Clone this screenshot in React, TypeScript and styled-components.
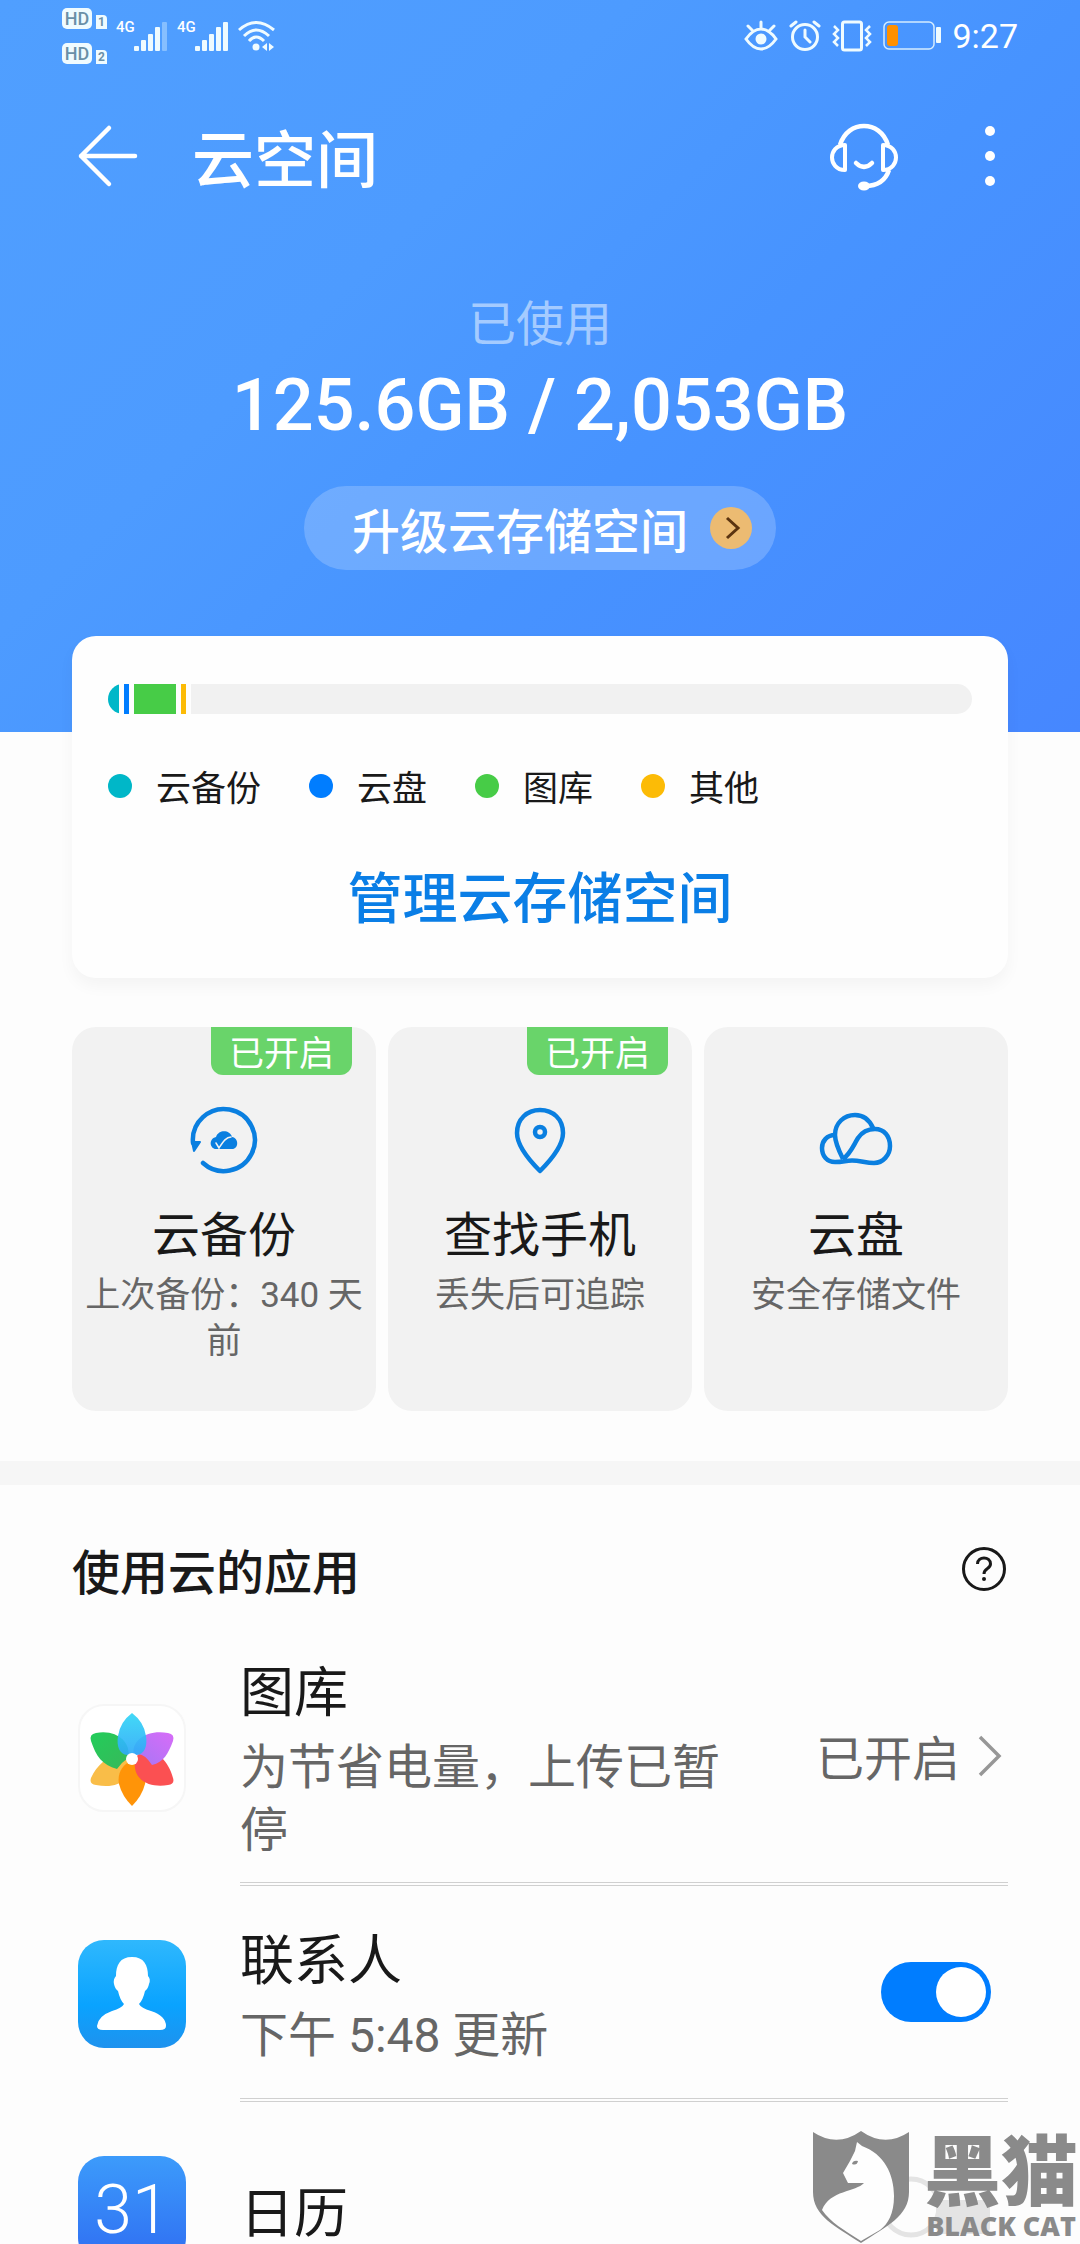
import React, { useState } from 'react';
import styled, { createGlobalStyle } from 'styled-components';

const GlobalStyle = createGlobalStyle`
  * { box-sizing: border-box; }
  html, body { margin: 0; padding: 0; }
  body {
    background: #fdfdfd;
    color: #191919;
    font-family: "Noto Sans CJK SC", sans-serif;
  }
  h1, h2, h3, p, ul { margin: 0; padding: 0; font-weight: 400; }
  ul { list-style: none; }
  button {
    border: 0;
    padding: 0;
    background: none;
    color: inherit;
    font-family: inherit;
    cursor: pointer;
  }
  svg { display: block; flex: none; }
`;

const Screen = styled.div`
  position: relative;
  height: 100vh;
  overflow: hidden;
  background: #fdfdfd;
`;

const Hero = styled.header`
  display: flex;
  flex-direction: column;
  padding-bottom: 162px;
  background: linear-gradient(135deg, #509fff 0%, #4d9bff 35%, #4793ff 60%, #4687ff 100%);
  color: #fff;
`;

const StatusBar = styled.div`
  display: flex;
  justify-content: space-between;
  height: 72px;
  padding: 0 62px;
  font-family: Roboto, sans-serif;
`;

const StatusGroup = styled.div<{ $gap: number }>`
  display: flex;
  align-items: center;
  gap: ${(p) => p.$gap}px;
`;

const Clock = styled.span`
  font-size: 34px;
  line-height: 40px;
`;

const SimColumn = styled.div`
  display: flex;
  flex-direction: column;
  gap: 14px;
`;

const SimRow = styled.div`
  display: flex;
  align-items: flex-end;
  gap: 4px;
`;

const HdTag = styled.span`
  width: 30px;
  height: 21px;
  border-radius: 5px;
  background: #effbff;
  color: #6a90a8;
  font-size: 18px;
  font-weight: 500;
  line-height: 21px;
  text-align: center;
`;

const SimNumber = styled.span`
  width: 11px;
  height: 14px;
  border-radius: 0 4px 0 0;
  background: #effbff;
  color: #6a90a8;
  font-size: 12px;
  font-weight: 700;
  line-height: 14px;
  text-align: center;
`;

const Network = styled.div`
  display: flex;
  align-items: flex-start;
`;

const NetworkType = styled.span`
  width: 18px;
  font-size: 15px;
  font-weight: 500;
  line-height: 15px;
`;

const AppBar = styled.div`
  display: flex;
  align-items: center;
  height: 168px;
  padding: 0 76px;
`;

const IconButton = styled.button`
  display: flex;
  align-items: center;
  justify-content: center;
`;

const Title = styled.h1`
  flex: 1;
  margin-left: 52px;
  font-size: 62px;
  font-weight: 500;
  line-height: 84px;
`;

const AppActions = styled.div`
  display: flex;
  align-items: center;
  gap: 76px;
`;

const Usage = styled.section`
  display: flex;
  flex-direction: column;
  align-items: center;
  padding-top: 50px;
`;

const UsageLabel = styled.p`
  font-size: 48px;
  line-height: 60px;
  color: rgba(255, 255, 255, 0.5);
`;

const UsageValue = styled.p`
  margin-top: 12px;
  font-family: Roboto, sans-serif;
  font-size: 72px;
  font-weight: 500;
  line-height: 88px;
`;

const UpgradeButton = styled.button`
  display: flex;
  align-items: center;
  gap: 22px;
  height: 84px;
  margin-top: 36px;
  padding: 0 24px 0 48px;
  border-radius: 42px;
  background: rgba(255, 255, 255, 0.2);
  font-size: 48px;
  font-weight: 500;
  line-height: 72px;
`;

const Content = styled.main`
  position: relative;
  margin-top: -96px;
`;

const StorageCard = styled.section`
  display: flex;
  flex-direction: column;
  margin: 0 72px;
  padding: 48px 36px;
  border-radius: 24px;
  background: #fefefe;
  box-shadow: 0 8px 16px rgba(0, 0, 0, 0.04);
`;

const Meter = styled.div`
  display: flex;
  gap: 5px;
  height: 30px;
  border-radius: 15px;
  overflow: hidden;
`;

const Segment = styled.span<{ $color: string; $width?: number }>`
  flex: ${(p) => (p.$width ? `0 0 ${p.$width}px` : '1')};
  background: ${(p) => p.$color};
`;

const Legend = styled.ul`
  display: flex;
  gap: 48px;
  margin-top: 48px;
`;

const LegendItem = styled.li<{ $color: string }>`
  display: flex;
  align-items: center;
  gap: 24px;
  font-size: 35px;
  line-height: 48px;

  &::before {
    content: "";
    width: 24px;
    height: 24px;
    border-radius: 50%;
    background: ${(p) => p.$color};
  }
`;

const ManageButton = styled.button`
  align-self: center;
  margin-top: 48px;
  color: #0a7ee6;
  font-size: 55px;
  font-weight: 500;
  line-height: 72px;
`;

const Tiles = styled.section`
  display: grid;
  grid-template-columns: repeat(3, 1fr);
  gap: 12px;
  margin: 49px 72px 50px;
`;

const Tile = styled.button`
  position: relative;
  display: flex;
  flex-direction: column;
  align-items: center;
  padding: 78px 12px 46px;
  border-radius: 24px;
  background: #f2f2f2;
`;

const Badge = styled.span`
  position: absolute;
  top: 0;
  right: 24px;
  padding: 0 18px;
  border-radius: 0 0 12px 12px;
  background: #69d46a;
  color: #fff;
  font-size: 35px;
  line-height: 48px;
`;

const TileTitle = styled.span`
  margin-top: 24px;
  font-size: 48px;
  line-height: 60px;
`;

const TileText = styled.span`
  margin-top: 12px;
  color: #666;
  font-family: Roboto, "Noto Sans CJK SC", sans-serif;
  font-size: 35px;
  line-height: 46px;
`;

const Band = styled.div`
  height: 24px;
  background: #f6f6f6;
`;

const SectionHead = styled.div`
  display: flex;
  align-items: center;
  justify-content: space-between;
  padding: 48px 72px 24px;
`;

const SectionTitle = styled.h2`
  font-size: 48px;
  font-weight: 500;
  line-height: 72px;
`;

const AppRow = styled.li`
  display: flex;
  align-items: stretch;
  gap: 54px;
  padding: 0 72px 0 78px;
`;

const AppIcon = styled.div`
  display: flex;
  align-items: center;
`;

const CalendarIcon = styled.span`
  width: 108px;
  height: 108px;
  border-radius: 26px;
  background: linear-gradient(#3c9bfb, #2f6df2);
  color: #fff;
  font-family: Roboto, sans-serif;
  font-size: 68px;
  font-weight: 300;
  line-height: 108px;
  text-align: center;
`;

const RowBody = styled.div`
  display: flex;
  flex: 1;
  align-items: center;
  justify-content: space-between;
  min-height: 216px;
  padding: 20px 0;
  border-bottom: 4px double #d0d0d0;
`;

const RowText = styled.div`
  display: flex;
  flex-direction: column;
  gap: 11px;
  max-width: 500px;
  padding-top: 4px;
`;

const RowTitle = styled.h3`
  font-size: 54px;
  line-height: 72px;
`;

const RowNote = styled.p`
  color: #666;
  font-family: Roboto, "Noto Sans CJK SC", sans-serif;
  font-size: 48px;
  line-height: 63px;
`;

const RowLink = styled.button`
  display: flex;
  align-items: center;
  gap: 14px;
  color: #666;
  font-size: 48px;
  line-height: 63px;
`;

const Switch = styled.input`
  appearance: none;
  width: 110px;
  height: 60px;
  margin: 0 17px 0 0;
  padding: 5px;
  border-radius: 30px;
  background: #c4c4c4;
  cursor: pointer;

  &::before {
    content: "";
    display: block;
    width: 50px;
    height: 50px;
    border-radius: 50%;
    background: #fff;
  }

  &:checked { background: #007dff; }
  &:checked::before { margin-left: auto; }
`;

const Watermark = styled.aside`
  position: absolute;
  right: 2px;
  bottom: 0;
  display: flex;
  align-items: flex-end;
  gap: 14px;
  color: #8a8a8a;
  pointer-events: none;
`;

const Ghost = styled.div`
  position: absolute;
  right: 90px;
  bottom: 6px;
`;

const WatermarkText = styled.div`
  display: flex;
  flex-direction: column;
  align-items: center;
`;

const WatermarkName = styled.span`
  font-family: Roboto, "Noto Sans CJK SC", sans-serif;
  font-size: 77px;
  font-weight: 900;
  line-height: 68px;
`;

const WatermarkLatin = styled.span`
  font-family: "Open Sans", sans-serif;
  font-size: 27px;
  font-weight: 800;
  line-height: 36px;
`;

const Signal = ({ bars }: { bars: number }) => (
  <svg width="34" height="32" viewBox="0 0 34 32" fill="#effbff">
    {[5, 11, 17, 24, 29].map((h, i) => (
      <rect key={h} x={i * 7} y={31 - h} width="5" height={h} rx="1" opacity={i < bars ? 1 : 0.35} />
    ))}
  </svg>
);

const WifiIcon = () => (
  <svg width="38" height="32" viewBox="0 0 38 32" fill="none" stroke="#effbff" strokeWidth="3">
    <path d="M1 10Q18 -5 36 10M6 16Q18 4 31 16M11 21Q18 13 26 21" />
    <circle cx="18" cy="27" r="3.5" fill="#effbff" stroke="none" />
    <path d="M29 23v8l-5-4zM31 23v8l5-4z" fill="#effbff" stroke="none" />
  </svg>
);

const EyeIcon = () => (
  <svg width="34" height="32" viewBox="0 0 34 32" fill="none" stroke="#effbff" strokeWidth="3" strokeLinecap="round">
    <path d="M2 19Q9 9 17 9T32 19Q25 29 17 29T2 19ZM17 8V2M8 10L4 6M26 10L30 6" />
    <circle cx="17" cy="19" r="5.5" fill="#effbff" stroke="none" />
  </svg>
);

const AlarmIcon = () => (
  <svg width="32" height="32" viewBox="0 0 32 32" fill="none" stroke="#effbff" strokeWidth="3" strokeLinecap="round">
    <circle cx="16" cy="17" r="12.5" />
    <path d="M16 10v7l5 5M2 6l5-4M30 6l-5-4" />
  </svg>
);

const VibrateIcon = () => (
  <svg width="40" height="32" viewBox="0 0 40 32" fill="none" stroke="#effbff" strokeWidth="3">
    <rect x="10.500" y="2" width="19" height="28" rx="2" />
    <path d="M2 6l4 4-4 4 4 4-4 4 4 4M38 6l-4 4 4 4-4 4 4 4-4 4" strokeWidth="2.500" />
  </svg>
);

const BatteryIcon = () => (
  <svg width="58" height="30" viewBox="0 0 58 30">
    <rect x="1" y="1" width="50" height="27" rx="5" fill="none" stroke="#d4ecff" strokeWidth="1.500" />
    <rect x="4" y="4" width="11" height="21" rx="3" fill="#ff9000" />
    <rect x="53" y="6" width="5" height="16" rx="1" fill="#effbff" />
  </svg>
);

const BackIcon = () => (
  <svg width="64" height="64" viewBox="0 0 64 64" fill="none" stroke="#fff" strokeWidth="4.500" strokeLinecap="round" strokeLinejoin="round">
    <path d="M33 4L5 32L33 60M5 32H59" />
  </svg>
);

const SupportIcon = () => (
  <svg width="72" height="72" viewBox="0 0 72 72" fill="none" stroke="#fff" strokeWidth="4.500" strokeLinejoin="round">
    <path d="M12 25C16 12 26 6 36 6S56 12 60 25" />
    <path d="M17 25V50C8 50 4 43 4 37.500S8 25 17 25ZM55 25V50C64 50 68 43 68 37.500S64 25 55 25Z" strokeWidth="4" />
    <path d="M28 43Q36 51 44 43" strokeLinecap="round" />
    <path d="M61 50C57 62 48 66 37 66" />
    <ellipse cx="36" cy="66" rx="6" ry="4.500" fill="#fff" stroke="none" />
  </svg>
);

const MoreIcon = () => (
  <svg width="28" height="64" viewBox="0 0 28 64" fill="#fff">
    <circle cx="14" cy="7" r="5" />
    <circle cx="14" cy="32" r="5" />
    <circle cx="14" cy="57" r="5" />
  </svg>
);

const GoIcon = () => (
  <svg width="42" height="42" viewBox="0 0 42 42" fill="none">
    <circle cx="21" cy="21" r="21" fill="#ecbb72" />
    <path d="M17 11L28 21L17 31" stroke="#5b3410" strokeWidth="3" />
  </svg>
);

const BackupIcon = () => (
  <svg width="72" height="72" viewBox="0 0 72 72" fill="none" stroke="#0a7fe0" strokeWidth="4.500" strokeLinecap="round">
    <path d="M5 38A31 31 0 1 1 15 58" />
    <path d="M4 37L12 37L6 46Z" fill="#0a7fe0" strokeWidth="2" strokeLinejoin="round" />
    <path d="M28 32C20 34 22 44 28 44H44C51 44 51 33 44 32C42 25 31 24 28 32Z" fill="#0a7fe0" stroke="none" />
    <path d="M28 38L31 43C35 37 38 32 43 32" stroke="#f2f2f2" strokeWidth="1.500" />
  </svg>
);

const FindIcon = () => (
  <svg width="72" height="72" viewBox="0 0 72 72" fill="none" stroke="#0a7fe0" strokeWidth="4.500" strokeLinejoin="round">
    <path d="M36 66C24 54 13 40 13 28C13 14 23 5 36 5S59 14 59 28C59 40 48 54 36 66Z" />
    <circle cx="36" cy="27" r="5" />
  </svg>
);

const DriveIcon = () => (
  <svg width="76" height="72" viewBox="0 0 76 72" fill="none" stroke="#0a7fe0" strokeWidth="4.500" strokeLinejoin="round">
    <path d="M17 30C9 30 4 36 4 43C4 51 9 57 17 57C26 57 27 55.500 34 55.500C42 55.500 48 58 56 58C65 58 72 50 72 41C72 31 66 24 57 24C49 24 44 27 40 33C35 41 33 48 25 54" />
    <path d="M25 54C19 42 17 36 17 30C17 18 26 10 37 10C45 10 51 14 55 23" />
  </svg>
);

const HelpIcon = () => (
  <svg width="48" height="48" viewBox="0 0 48 48" fill="none" stroke="#191919" strokeWidth="3">
    <circle cx="24" cy="24" r="20.500" />
    <path d="M17.500 19C17.500 11 30.500 11 30.500 19C30.500 24 24 23 24 29" />
    <circle cx="24" cy="34" r="2" fill="#191919" stroke="none" />
  </svg>
);

const ChevronIcon = () => (
  <svg width="34" height="48" viewBox="0 0 34 48" fill="none" stroke="#979797" strokeWidth="3.500">
    <path d="M6 5L25 24L6 43" />
  </svg>
);

const GalleryIcon = () => (
  <svg width="108" height="108" viewBox="0 0 108 108">
    <defs>
      <linearGradient id="sky" x1="0" y1="0" x2="0" y2="1"><stop stopColor="#32d6f6" /><stop offset="1" stopColor="#2faaf8" /></linearGradient>
      <linearGradient id="violet" x1="1" y1="0" x2="0" y2="1"><stop stopColor="#d86cf8" /><stop offset="1" stopColor="#a477f5" /></linearGradient>
      <linearGradient id="leaf" x1="0" y1="0" x2="1" y2="1"><stop stopColor="#22cd5a" /><stop offset="1" stopColor="#38b85a" /></linearGradient>
    </defs>
    <rect x="1" y="1" width="106" height="106" rx="25" fill="#fff" stroke="#f6f6f6" strokeWidth="2" />
    <path d="M54 54C36 46 20 58 13 74Q11 80 18 81C38 85 54 78 54 54Z" fill="#f9bd48" />
    <path d="M54 57C44 60 39 70 41 80Q44 92 54 102Q64 92 67 80C69 70 64 60 54 57Z" fill="#ff9408" />
    <path d="M57 56C64 38 88 48 95 74Q97 80 90 81C74 84 54 78 57 56Z" fill="#fb5052" />
    <path d="M56 52C52 36 70 25 90 29Q97 30 95 37C90 50 86 58 74 61Q64 46 56 52Z" fill="url(#violet)" />
    <path d="M50 54C54 38 38 25 18 29Q11 30 13 37C18 52 24 61 39 65Q44 58 50 54Z" fill="url(#leaf)" />
    <path d="M54 50C43 54 38 44 40 32Q42 18 54 9Q66 18 68 32C70 44 65 54 54 50Z" fill="url(#sky)" opacity="0.920" />
    <circle cx="54" cy="55" r="6" fill="#fff" />
  </svg>
);

const ContactsIcon = () => (
  <svg width="108" height="108" viewBox="0 0 108 108">
    <defs>
      <linearGradient id="contact" x1="0" y1="0" x2="0" y2="1"><stop stopColor="#2fb8fd" /><stop offset="0.600" stopColor="#0aa3ff" /><stop offset="1" stopColor="#1e92ee" /></linearGradient>
    </defs>
    <rect width="108" height="108" rx="26" fill="url(#contact)" />
    <path d="M54 17C66 17 70 25 70 36Q73 39 71 44Q70 49 67 51Q65 60 61 64Q63 68 73 71Q88 76 88 86Q88 90 82 90H25Q19 90 19 86Q20 76 34 71Q44 68 46 64Q42 60 40 51Q37 49 36 44Q35 39 38 36C38 25 42 17 54 17Z" fill="#fff" />
  </svg>
);

const ShieldIcon = () => (
  <svg width="98" height="114" viewBox="0 0 98 114">
    <path d="M1 2Q25 18 49 1Q73 18 97 2V62C97 86 75 96 49 113C23 96 1 86 1 62Z" fill="#8a8a8a" />
    <path d="M43 21L45 12L50 16C72 24 82 44 82 66C82 84 76 94 68 100L49 111C32 100 18 92 10 80C18 60 44 62 52 53H36L31 43L38 31Z" fill="#fefefe" />
    <path d="M40 34Q41 30 46 31Q45 36 40 34Z" fill="#8a8a8a" />
  </svg>
);

const storage = [
  { name: '云备份', color: '#00b7c8', width: 11 },
  { name: '云盘', color: '#007dff', width: 5 },
  { name: '图库', color: '#47cc47', width: 42 },
  { name: '其他', color: '#fcbb06', width: 5 },
];

const tiles = [
  { title: '云备份', text: '上次备份：340 天前', on: true, Icon: BackupIcon },
  { title: '查找手机', text: '丢失后可追踪', on: true, Icon: FindIcon },
  { title: '云盘', text: '安全存储文件', on: false, Icon: DriveIcon },
];

export default function App() {
  const [contacts, setContacts] = useState(true);

  return (
    <>
      <GlobalStyle />
      <Screen>
        <Hero>
          <StatusBar>
            <StatusGroup $gap={9}>
              <SimColumn>
                {[1, 2].map((n) => (
                  <SimRow key={n}>
                    <HdTag>HD</HdTag>
                    <SimNumber>{n}</SimNumber>
                  </SimRow>
                ))}
              </SimColumn>
              <Network><NetworkType>4G</NetworkType><Signal bars={4} /></Network>
              <Network><NetworkType>4G</NetworkType><Signal bars={5} /></Network>
              <WifiIcon />
            </StatusGroup>
            <StatusGroup $gap={11}>
              <EyeIcon />
              <AlarmIcon />
              <VibrateIcon />
              <BatteryIcon />
              <Clock>9:27</Clock>
            </StatusGroup>
          </StatusBar>

          <AppBar>
            <IconButton aria-label="返回"><BackIcon /></IconButton>
            <Title>云空间</Title>
            <AppActions>
              <IconButton aria-label="客服"><SupportIcon /></IconButton>
              <IconButton aria-label="更多"><MoreIcon /></IconButton>
            </AppActions>
          </AppBar>

          <Usage>
            <UsageLabel>已使用</UsageLabel>
            <UsageValue>125.6GB / 2,053GB</UsageValue>
            <UpgradeButton>升级云存储空间<GoIcon /></UpgradeButton>
          </Usage>
        </Hero>

        <Content>
          <StorageCard>
            <Meter>
              {storage.map((s) => <Segment key={s.name} $color={s.color} $width={s.width} />)}
              <Segment $color="#f1f1f1" />
            </Meter>
            <Legend>
              {storage.map((s) => <LegendItem key={s.name} $color={s.color}>{s.name}</LegendItem>)}
            </Legend>
            <ManageButton>管理云存储空间</ManageButton>
          </StorageCard>

          <Tiles>
            {tiles.map(({ title, text, on, Icon }) => (
              <Tile key={title}>
                {on && <Badge>已开启</Badge>}
                <Icon />
                <TileTitle>{title}</TileTitle>
                <TileText>{text}</TileText>
              </Tile>
            ))}
          </Tiles>

          <Band />

          <SectionHead>
            <SectionTitle>使用云的应用</SectionTitle>
            <IconButton aria-label="帮助"><HelpIcon /></IconButton>
          </SectionHead>

          <ul>
            <AppRow>
              <AppIcon><GalleryIcon /></AppIcon>
              <RowBody>
                <RowText>
                  <RowTitle>图库</RowTitle>
                  <RowNote>为节省电量，上传已暂停</RowNote>
                </RowText>
                <RowLink>已开启<ChevronIcon /></RowLink>
              </RowBody>
            </AppRow>
            <AppRow>
              <AppIcon><ContactsIcon /></AppIcon>
              <RowBody>
                <RowText>
                  <RowTitle as="label" htmlFor="contacts-sync">联系人</RowTitle>
                  <RowNote>下午 5:48 更新</RowNote>
                </RowText>
                <Switch
                  id="contacts-sync"
                  type="checkbox"
                  checked={contacts}
                  onChange={(e) => setContacts(e.target.checked)}
                />
              </RowBody>
            </AppRow>
            <AppRow>
              <AppIcon><CalendarIcon>31</CalendarIcon></AppIcon>
              <RowBody>
                <RowText><RowTitle>日历</RowTitle></RowText>
              </RowBody>
            </AppRow>
          </ul>
        </Content>

        <Ghost>
          <svg width="110" height="62" viewBox="0 0 110 62" fill="none">
            <circle cx="31" cy="31" r="28" stroke="#e4e4e4" strokeWidth="5" />
            <rect x="56" y="24" width="54" height="34" rx="6" fill="#e4e4e4" />
          </svg>
        </Ghost>
        <Watermark>
          <ShieldIcon />
          <WatermarkText>
            <WatermarkName>黑猫</WatermarkName>
            <WatermarkLatin>BLACK CAT</WatermarkLatin>
          </WatermarkText>
        </Watermark>
      </Screen>
    </>
  );
}
